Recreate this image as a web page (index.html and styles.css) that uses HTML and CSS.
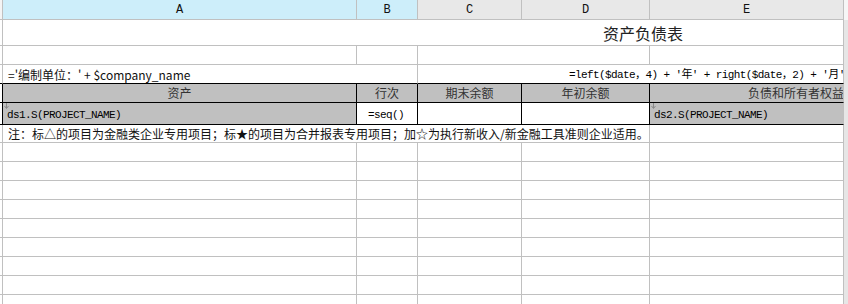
FILE: index.html
```html
<!DOCTYPE html>
<html lang="zh-CN">
<head>
    <meta charset="UTF-8">
    <title>资产负债表 - 报表设计</title>
    <link rel="stylesheet" href="styles.css">
</head>
<body>
    <div class="sheet">
        <table class="grid">
            <colgroup>
                <col class="c-stub">
                <col class="c-a">
                <col class="c-b">
                <col class="c-c">
                <col class="c-d">
                <col class="c-e">
            </colgroup>
            <tr class="r-head">
                <td class="stub"></td>
                <td class="colname sel">A</td>
                <td class="colname sel">B</td>
                <td class="colname">C</td>
                <td class="colname">D</td>
                <td class="colname">E</td>
            </tr>
            <tr class="r-title">
                <td class="stub"></td>
                <td colspan="5" class="title"><span>资产负债表</span></td>
            </tr>
            <tr class="r-std">
                <td class="stub"></td>
                <td></td>
                <td></td>
                <td colspan="2"></td>
                <td></td>
            </tr>
            <tr class="r-std r-info">
                <td class="stub"></td>
                <td colspan="2" class="company">='编制单位：' + $company_name</td>
                <td colspan="3" class="formula date">=left($date，4) + '年' + right($date，2) + '月'</td>
            </tr>
            <tr class="r-std r-cols">
                <td class="stub"></td>
                <td class="label">资产</td>
                <td class="label">行次</td>
                <td class="label">期末余额</td>
                <td class="label">年初余额</td>
                <td class="label label-right">负债和所有者权益</td>
            </tr>
            <tr class="r-data">
                <td class="stub"></td>
                <td class="formula ds"><svg class="mark" width="5" height="6" viewBox="0 0 5 6"><path d="M2.5 0V5M0.5 3L2.5 5.5L4.5 3" stroke="#8a8a8a" fill="none"/></svg>ds1.S(PROJECT_NAME)</td>
                <td class="formula seq">=seq()</td>
                <td></td>
                <td></td>
                <td class="formula ds"><svg class="mark" width="5" height="6" viewBox="0 0 5 6"><path d="M2.5 0V5M0.5 3L2.5 5.5L4.5 3" stroke="#8a8a8a" fill="none"/></svg>ds2.S(PROJECT_NAME)</td>
            </tr>
            <tr class="r-note">
                <td class="stub"></td>
                <td colspan="4" class="note">注：标△的项目为金融类企业专用项目；标★的项目为合并报表专用项目；加☆为执行新收入/新金融工具准则企业适用。</td>
                <td></td>
            </tr>
            <tr class="r-std"><td class="stub"></td><td></td><td></td><td></td><td></td><td></td></tr>
            <tr class="r-std"><td class="stub"></td><td></td><td></td><td></td><td></td><td></td></tr>
            <tr class="r-std"><td class="stub"></td><td></td><td></td><td></td><td></td><td></td></tr>
            <tr class="r-std"><td class="stub"></td><td></td><td></td><td></td><td></td><td></td></tr>
            <tr class="r-std"><td class="stub"></td><td></td><td></td><td></td><td></td><td></td></tr>
            <tr class="r-std"><td class="stub"></td><td></td><td></td><td></td><td></td><td></td></tr>
            <tr class="r-std"><td class="stub"></td><td></td><td></td><td></td><td></td><td></td></tr>
            <tr class="r-std"><td class="stub"></td><td></td><td></td><td></td><td></td><td></td></tr>
            <tr class="r-std"><td class="stub"></td><td></td><td></td><td></td><td></td><td></td></tr>
        </table>
        <div class="scrollbar"><span class="scroll-top"></span></div>
    </div>
</body>
</html>
```

FILE: styles.css
```css
body {
    margin: 0;
    background: #ffffff;
    font-family: "Noto Sans CJK SC", "Noto Sans", sans-serif;
    color: #000;
    overflow: hidden;
}
.sheet {
    display: flex;
    width: 848px;
    height: 304px;
    overflow: hidden;
}
.grid {
    table-layout: fixed;
    border-collapse: separate;
    border-spacing: 0;
    width: 844px;
    flex: none;
    font-size: 12px;
    line-height: 16px;
}
.c-stub { width: 3px; }
.c-a { width: 354px; }
.c-b { width: 61px; }
.c-c { width: 104px; }
.c-d { width: 128px; }
.c-e { width: 194px; }

.grid td {
    box-sizing: border-box;
    padding: 0;
    border-right: 1px solid #c0c0c0;
    border-bottom: 1px solid #c0c0c0;
    white-space: nowrap;
    overflow: hidden;
}
.grid td.stub {
    background: #fff;
}

/* column letters */
.r-head td { height: 20px; }
.grid td.colname {
    background: #e8e8e8;
    text-align: center;
    font-family: "Liberation Mono", "DejaVu Sans Mono", monospace;
    font-size: 12px;
    color: #111;
}
.grid td.colname.sel { background: #cdeefa; }
.r-head td.stub { background: #f4f4f4; }

.r-title td { height: 26px; }
.r-std td { height: 19px; }
.r-data td { height: 22px; }
.r-note td { height: 18px; }

.grid td.title {
    font-size: 16px;
    color: #222;
}
.title span {
    display: block;
    padding-left: 600px;
    line-height: 24px;
}

.grid td.company {
    font-size: 12px;
    padding-left: 5px;
    padding-top: 2px;
    color: #111;
}
.grid td.formula {
    font-family: "Liberation Mono", "DejaVu Sans Mono", "Noto Sans CJK SC", monospace;
    font-size: 11px;
    letter-spacing: -0.6px;
}
.grid td.date {
    padding-left: 151px;
    padding-top: 2px;
}

/* black framed block: header + data row */
.r-info td { border-bottom-color: #000; }
.r-cols td, .r-data td {
    border-right-color: #000;
    border-bottom-color: #000;
}
.r-cols td {
    background: #c0c0c0;
}
.label {
    text-align: center;
    color: #333;
}
.grid td.label-right {
    text-align: left;
    padding-left: 98px;
    border-right-color: #c0c0c0;
}
.grid td.ds {
    background: #c0c0c0;
    position: relative;
    padding-left: 4px;
    padding-top: 3px;
}
.grid td.seq { padding-left: 11px; padding-top: 2px; }
.r-data td:last-child { border-right-color: #c0c0c0; }
.mark {
    position: absolute;
    left: 1px;
    top: 0;
}

.grid td.note {
    padding-left: 5px;
    color: #111;
}

.scrollbar {
    flex: none;
    width: 4px;
    height: 304px;
    background: #e6e6e6;
}
.scroll-top {
    display: block;
    height: 20px;
    background: #f6f6f6;
}
```
